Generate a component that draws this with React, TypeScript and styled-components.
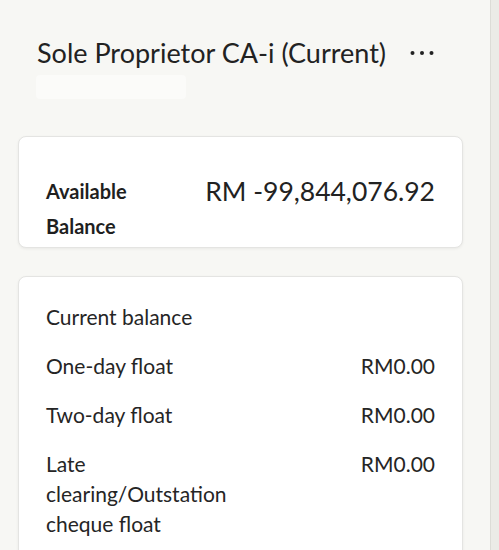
import React from 'react';
import styled, { createGlobalStyle } from 'styled-components';

const GlobalStyle = createGlobalStyle`
  html, body {
    margin: 0;
    padding: 0;
    background: #f7f7f4;
  }
  body {
    font-family: Lato, "Open Sans", "Liberation Sans", sans-serif;
    color: #252525;
  }
`;

const Screen = styled.div`
  display: grid;
  grid-template-columns: 1fr 9px;
  width: 499px;
  height: 550px;
  overflow: hidden;
`;

const Main = styled.div`
  padding: 0 27px 0 18px;
  display: flex;
  flex-direction: column;
`;

const Rail = styled.div`
  background: #ebebe7;
  border-left: 1px solid #dcdcd7;
`;

const Header = styled.header`
  display: flex;
  align-items: center;
  justify-content: space-between;
  padding: 35px 29px 0 19px;
`;

const Title = styled.h1`
  margin: 0;
  font-size: 27px;
  font-weight: 400;
  line-height: 36px;
  color: #222;
`;

const Masked = styled.div`
  width: 150px;
  height: 24px;
  margin: 4px 0 37px 18px;
  border-radius: 4px;
  background: rgba(255, 255, 255, 0.45);
`;

const Card = styled.section<{ $pad: string }>`
  background: #fff;
  border: 1px solid #e4e4e2;
  border-radius: 8px;
  box-shadow: 0 1px 3px rgba(0, 0, 0, 0.06);
  padding: ${p => p.$pad};
  margin-bottom: 28px;
`;

const Row = styled.div<{ $gap?: number }>`
  display: flex;
  justify-content: space-between;
  align-items: flex-start;
  margin-bottom: ${p => p.$gap ?? 0}px;
`;

const BoldLabel = styled.div`
  width: 120px;
  font-size: 20px;
  font-weight: 700;
  line-height: 35px;
  color: #1f1f1f;
`;

const BigAmount = styled.div`
  font-size: 26.5px;
  line-height: 35px;
  white-space: nowrap;
  color: #222;
`;

const Label = styled.div`
  max-width: 200px;
  font-size: 21px;
  line-height: 30px;
`;

const Value = styled.div`
  font-size: 21px;
  line-height: 30px;
  white-space: nowrap;
`;

const Dots = () => (
  <svg width="24" height="6" viewBox="0 0 24 6" fill="#222">
    <circle cx="2.5" cy="3" r="2" />
    <circle cx="12" cy="3" r="2" />
    <circle cx="21.5" cy="3" r="2" />
  </svg>
);

const floats = [
  { label: 'One-day float', value: 'RM0.00' },
  { label: 'Two-day float', value: 'RM0.00' },
  { label: 'Late clearing/Outstation cheque float', value: 'RM0.00' },
];

export default function App() {
  return (
    <>
      <GlobalStyle />
      <Screen>
        <Main>
          <Header>
            <Title>Sole Proprietor CA-i (Current)</Title>
            <Dots />
          </Header>
          <Masked />

          <Card $pad="37px 27px 3px 27px">
            <Row>
              <BoldLabel>Available Balance</BoldLabel>
              <BigAmount>RM -99,844,076.92</BigAmount>
            </Row>
          </Card>

          <Card $pad="25px 27px 20px 27px">
            <Row $gap={19}>
              <Label>Current balance</Label>
            </Row>
            {floats.map(f => (
              <Row key={f.label} $gap={19}>
                <Label>{f.label}</Label>
                <Value>{f.value}</Value>
              </Row>
            ))}
          </Card>
        </Main>
        <Rail />
      </Screen>
    </>
  );
}
